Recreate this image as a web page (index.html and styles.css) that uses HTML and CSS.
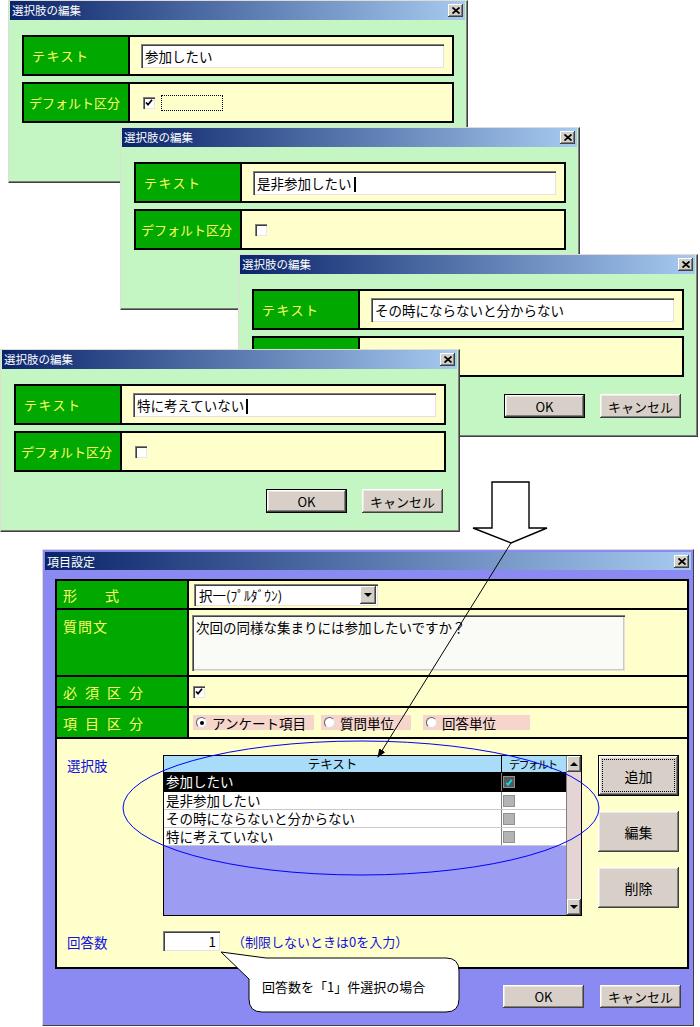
FILE: index.html
```html
<!DOCTYPE html>
<html lang="ja">
<head>
    <meta charset="UTF-8">
    <title>項目設定</title>
    <link rel="stylesheet" href="styles.css">
</head>
<body>

<!-- 選択肢の編集 ダイアログ (重なり順に) -->
<div class="dlg win1">
    <div class="titlebar">
        <span>選択肢の編集</span>
        <span class="close"><svg width="8" height="7" viewBox="0 0 8 7"><path d="M0.5 0.5L7.5 6.5M7.5 0.5L0.5 6.5" stroke="#000" stroke-width="1.8"/></svg></span>
    </div>
    <div class="dlg-body">
        <div class="row">
            <div class="label wide">テキスト</div>
            <div class="value"><div class="textbox">参加したい</div></div>
        </div>
        <div class="row">
            <div class="label">デフォルト区分</div>
            <div class="value">
                <span class="check"><svg width="12" height="12" viewBox="0 0 12 12"><path d="M3 5.5l2 2.2 4-5" stroke="#000" stroke-width="1.8" fill="none"/></svg></span>
                <span class="focus"></span>
            </div>
        </div>
        <div class="buttons">
            <button class="btn default">OK</button>
            <button class="btn">キャンセル</button>
        </div>
    </div>
</div>

<div class="dlg win2">
    <div class="titlebar">
        <span>選択肢の編集</span>
        <span class="close"><svg width="8" height="7" viewBox="0 0 8 7"><path d="M0.5 0.5L7.5 6.5M7.5 0.5L0.5 6.5" stroke="#000" stroke-width="1.8"/></svg></span>
    </div>
    <div class="dlg-body">
        <div class="row">
            <div class="label wide">テキスト</div>
            <div class="value"><div class="textbox">是非参加したい<span class="caret"></span></div></div>
        </div>
        <div class="row">
            <div class="label">デフォルト区分</div>
            <div class="value"><span class="check"></span></div>
        </div>
        <div class="buttons">
            <button class="btn default">OK</button>
            <button class="btn">キャンセル</button>
        </div>
    </div>
</div>

<div class="dlg win3">
    <div class="titlebar">
        <span>選択肢の編集</span>
        <span class="close"><svg width="8" height="7" viewBox="0 0 8 7"><path d="M0.5 0.5L7.5 6.5M7.5 0.5L0.5 6.5" stroke="#000" stroke-width="1.8"/></svg></span>
    </div>
    <div class="dlg-body">
        <div class="row">
            <div class="label wide">テキスト</div>
            <div class="value"><div class="textbox">その時にならないと分からない</div></div>
        </div>
        <div class="row">
            <div class="label">デフォルト区分</div>
            <div class="value"><span class="check"></span></div>
        </div>
        <div class="buttons">
            <button class="btn default">OK</button>
            <button class="btn">キャンセル</button>
        </div>
    </div>
</div>

<div class="dlg win4">
    <div class="titlebar">
        <span>選択肢の編集</span>
        <span class="close"><svg width="8" height="7" viewBox="0 0 8 7"><path d="M0.5 0.5L7.5 6.5M7.5 0.5L0.5 6.5" stroke="#000" stroke-width="1.8"/></svg></span>
    </div>
    <div class="dlg-body">
        <div class="row">
            <div class="label wide">テキスト</div>
            <div class="value"><div class="textbox">特に考えていない<span class="caret"></span></div></div>
        </div>
        <div class="row">
            <div class="label">デフォルト区分</div>
            <div class="value"><span class="check"></span></div>
        </div>
        <div class="buttons">
            <button class="btn default">OK</button>
            <button class="btn">キャンセル</button>
        </div>
    </div>
</div>

<!-- 項目設定 -->
<div class="main">
    <div class="titlebar main-title">
        <span>項目設定</span>
        <span class="close"><svg width="8" height="7" viewBox="0 0 8 7"><path d="M0.5 0.5L7.5 6.5M7.5 0.5L0.5 6.5" stroke="#000" stroke-width="1.8"/></svg></span>
    </div>

    <div class="frame">
        <div class="frow r1">
            <div class="flabel">形　　式</div>
            <div class="fvalue">
                <div class="select">
                    <span>択一(ﾌﾟﾙﾀﾞｳﾝ)</span>
                    <span class="drop"><span class="tri-down"></span></span>
                </div>
            </div>
        </div>
        <div class="frow r2">
            <div class="flabel top">質問文</div>
            <div class="fvalue top">
                <div class="textarea">次回の同様な集まりには参加したいですか？</div>
            </div>
        </div>
        <div class="frow r3">
            <div class="flabel spaced">必須区分</div>
            <div class="fvalue">
                <span class="check small"><svg width="12" height="12" viewBox="0 0 12 12"><path d="M3 5.5l2 2.2 4-5" stroke="#000" stroke-width="1.8" fill="none"/></svg></span>
            </div>
        </div>
        <div class="frow r4">
            <div class="flabel spaced">項目区分</div>
            <div class="fvalue">
                <span class="opt o1"><span class="radio on"></span>アンケート項目</span>
                <span class="opt o2"><span class="radio"></span>質問単位</span>
                <span class="opt o3"><span class="radio"></span>回答単位</span>
            </div>
        </div>

        <div class="choices">
            <div class="blue-label">選択肢</div>
            <div class="grid">
                <div class="grid-main">
                    <div class="ghead">
                        <div class="gcol-text">テキスト</div>
                        <div class="gcol-def">デフォルト</div>
                    </div>
                    <div class="grow sel">
                        <div class="gcol-text">参加したい</div>
                        <div class="gcol-def"><span class="gcheck on"><svg width="11" height="11" viewBox="0 0 11 11"><path d="M2.5 6l2 2 4-5.5" stroke="#00e0f0" stroke-width="2" fill="none"/></svg></span></div>
                    </div>
                    <div class="grow">
                        <div class="gcol-text">是非参加したい</div>
                        <div class="gcol-def"><span class="gcheck"></span></div>
                    </div>
                    <div class="grow">
                        <div class="gcol-text">その時にならないと分からない</div>
                        <div class="gcol-def"><span class="gcheck"></span></div>
                    </div>
                    <div class="grow">
                        <div class="gcol-text">特に考えていない</div>
                        <div class="gcol-def"><span class="gcheck"></span></div>
                    </div>
                </div>
                <div class="scrollbar">
                    <span class="sbtn"><span class="tri-up"></span></span>
                    <span class="track"></span>
                    <span class="sbtn"><span class="tri-down"></span></span>
                </div>
            </div>
            <div class="side-buttons">
                <button class="btn tall default"><span class="focus-in">追加</span></button>
                <button class="btn tall">編集</button>
                <button class="btn tall">削除</button>
            </div>
        </div>

        <div class="answers">
            <div class="blue-label">回答数</div>
            <div class="numbox">1</div>
            <div class="hint">（制限しないときは0を入力）</div>
        </div>
    </div>

    <div class="buttons main-buttons">
        <button class="btn">OK</button>
        <button class="btn">キャンセル</button>
    </div>
</div>

<!-- 注釈 -->
<svg class="overlay" width="700" height="1027" viewBox="0 0 700 1027">
    <defs>
        <marker id="ah" markerWidth="9" markerHeight="8" refX="8" refY="4" orient="auto" markerUnits="userSpaceOnUse">
            <path d="M0,0.5 L9,4 L0,7.5 z" fill="#000"/>
        </marker>
    </defs>
    <polygon points="492,482 529,482 529,528 547,528 511,543 473,528 492,528" fill="#fff" stroke="#000" stroke-width="1.4"/>
    <line x1="511" y1="543" x2="378" y2="757" stroke="#000" stroke-width="1" marker-end="url(#ah)"/>
    <ellipse cx="361" cy="808" rx="238" ry="67" fill="none" stroke="#0000ff" stroke-width="1"/>
    <path d="M266,958 L446,958 Q459,958 459,971 L459,999 Q459,1012 446,1012 L262,1012 Q249,1012 249,999 L249,979 L221,952 Z" fill="#fff" stroke="#000" stroke-width="1"/>
</svg>
<div class="callout-text">回答数を「1」件選択の場合</div>

</body>
</html>
```

FILE: styles.css
```css
* {
    box-sizing: border-box;
    margin: 0;
    padding: 0;
}

body {
    position: relative;
    width: 700px;
    height: 1027px;
    overflow: hidden;
    background-color: #fff;
    font-family: "Noto Sans CJK JP", "Liberation Sans", sans-serif;
    font-size: 13px;
    color: #000;
}

/* ウィンドウ共通 */
.titlebar {
    height: 19px;
    display: flex;
    align-items: center;
    justify-content: space-between;
    padding: 0 2px;
    background: linear-gradient(to right, #0a246a, #a6caf0);
    color: #fff;
    font-size: 11.5px;
    line-height: 19px;
}

.close {
    width: 15px;
    height: 13px;
    display: flex;
    align-items: center;
    justify-content: center;
    background-color: #d4d0c8;
    box-shadow: inset -1px -1px #404040, inset 1px 1px #fff, inset -2px -2px #808080;
}

.btn {
    width: 81px;
    height: 24px;
    font-family: inherit;
    font-size: 13px;
    color: #000;
    background-color: #d8d0c8;
    border: none;
    box-shadow: inset -1px -1px #404040, inset 1px 1px #fff, inset -2px -2px #808080, inset 2px 2px #ece8e0;
}

.btn.default {
    border: 1px solid #000;
}

.buttons {
    display: flex;
    justify-content: flex-end;
    gap: 15px;
    margin-top: 17px;
    padding-right: 3px;
}

.check {
    width: 12px;
    height: 12px;
    display: inline-flex;
    background-color: #fff;
    box-shadow: inset 1px 1px #808080, inset 2px 2px #404040, inset -1px -1px #e8e8e8;
    margin-left: 2px;
}

.caret {
    display: inline-block;
    width: 2px;
    height: 15px;
    background-color: #000;
    margin-left: 2px;
    vertical-align: -3px;
}

/* 選択肢の編集 */
.dlg {
    position: absolute;
    width: 460px;
    height: 183px;
    padding: 0 2px 2px 1px;
    background-color: #c4f6c4;
    border: 1px solid;
    border-color: #e0dcd4 #404040 #404040 #e0dcd4;
    box-shadow: inset -1px -1px #808080;
}

.win1 { left: 8px; top: 0; }
.win2 { left: 120px; top: 127px; }
.win3 { left: 238px; top: 254px; }
.win4 { left: 0; top: 349px; }

.dlg-body {
    padding: 15px 11px 0 12px;
}

.row {
    display: flex;
    height: 41px;
    border: 2px solid #000;
}

.row + .row {
    margin-top: 6px;
}

.label {
    width: 106px;
    display: flex;
    align-items: center;
    padding-left: 5px;
    background-color: #00a800;
    color: #ffff66;
    border-right: 2px solid #000;
    font-size: 13px;
}

.label.wide {
    padding-left: 8px;
    letter-spacing: 1.5px;
}

.value {
    flex: 1;
    display: flex;
    align-items: center;
    padding-left: 11px;
    background-color: #ffffcc;
}

.textbox {
    width: 303px;
    height: 24px;
    padding-left: 4px;
    background-color: #fff;
    box-shadow: inset 1px 1px #808080, inset 2px 2px #404040, inset -1px -1px #e8e0e0;
    font-size: 13.5px;
    line-height: 24px;
    white-space: nowrap;
}

.focus {
    width: 62px;
    height: 16px;
    margin-left: 6px;
    border: 1px dotted #000;
}

/* 項目設定 */
.main {
    position: absolute;
    left: 42px;
    top: 549px;
    width: 652px;
    height: 477px;
    padding: 2px;
    background-color: #8a8af2;
    border: 1px solid;
    border-color: #e0dcd4 #404040 #404040 #e0dcd4;
}

.main-title {
    height: 18px;
    font-size: 12px;
}

.frame {
    width: 634px;
    height: 390px;
    margin: 9px 0 0 10px;
    background-color: #ffffcc;
    border: 2px solid #000;
}

.frow {
    display: flex;
    border-bottom: 2px solid #000;
}

.r1 { height: 29px; }
.r2 { height: 67px; }
.r3 { height: 31px; }
.r4 { height: 31px; }

.flabel {
    width: 132px;
    display: flex;
    align-items: center;
    padding-left: 6px;
    background-color: #00a800;
    color: #ffff66;
    border-right: 2px solid #000;
    font-size: 14px;
}

.flabel.top {
    align-items: flex-start;
    padding-top: 6px;
    letter-spacing: 1px;
}

.flabel.spaced {
    letter-spacing: 8px;
}

.fvalue {
    flex: 1;
    display: flex;
    align-items: center;
    padding-left: 4px;
}

.fvalue.top {
    align-items: flex-start;
    padding-top: 5px;
    padding-left: 3px;
}

.select {
    width: 184px;
    height: 22px;
    margin-left: 1px;
    display: flex;
    align-items: center;
    padding: 2px 2px 2px 5px;
    background-color: #fff;
    box-shadow: inset 1px 1px #808080, inset 2px 2px #404040, inset -1px -1px #e8e0e0;
    font-size: 13.5px;
}

.drop {
    width: 16px;
    height: 18px;
    margin-left: auto;
    display: flex;
    align-items: center;
    justify-content: center;
    background-color: #d4d0c8;
    box-shadow: inset -1px -1px #404040, inset 1px 1px #fff, inset -2px -2px #808080;
}

.tri-down {
    width: 0;
    height: 0;
    border-left: 4px solid transparent;
    border-right: 4px solid transparent;
    border-top: 4px solid #000;
}

.tri-up {
    width: 0;
    height: 0;
    border-left: 4px solid transparent;
    border-right: 4px solid transparent;
    border-bottom: 4px solid #000;
}

.textarea {
    width: 433px;
    height: 56px;
    padding: 3px 4px;
    background-color: #fafaf6;
    box-shadow: inset 1px 1px #808080, inset 2px 2px #404040, inset -1px -1px #e8e0e0, inset -2px -2px #c8c8c8;
    font-size: 13.5px;
    line-height: 18px;
}

.check.small {
    width: 12px;
    height: 12px;
    margin-left: 0;
}

.opt {
    display: inline-flex;
    align-items: center;
    gap: 5px;
    height: 15px;
    padding-left: 3px;
    background-color: #f6d6cc;
    font-size: 13.5px;
}

.o1 { width: 121px; margin-right: 7px; }
.o2 { width: 90px; margin-right: 12px; }
.o3 { width: 107px; }

.radio {
    width: 11px;
    height: 11px;
    display: inline-flex;
    align-items: center;
    justify-content: center;
    border-radius: 50%;
    background-color: #fff;
    border: 1px solid;
    border-color: #606060 #e0e0e0 #e0e0e0 #606060;
}

.radio.on::after {
    content: "";
    width: 4px;
    height: 4px;
    border-radius: 50%;
    background-color: #000;
}

.choices {
    display: flex;
    padding: 16px 0 0 10px;
}

.blue-label {
    width: 96px;
    padding-top: 2px;
    color: #1010e0;
    font-size: 13.5px;
    line-height: 16px;
}

.grid {
    width: 419px;
    height: 161px;
    display: flex;
    border: 1px solid #000;
}

.grid-main {
    flex: 1;
    display: flex;
    flex-direction: column;
    background-color: #9c9cf2;
}

.ghead {
    display: flex;
    height: 17px;
    background-color: #a8dcf8;
    border-bottom: 1px solid #000;
    line-height: 16px;
}

.ghead .gcol-text {
    text-align: center;
    font-size: 12.5px;
    padding-left: 0;
}

.ghead .gcol-def {
    font-size: 11px;
    letter-spacing: -1.5px;
    padding-left: 7px;
    white-space: nowrap;
    overflow: hidden;
    border-left-color: #000;
}

.gcol-text {
    width: 337px;
    padding-left: 2px;
    white-space: nowrap;
}

.gcol-def {
    flex: 1;
    display: flex;
    align-items: center;
    border-left: 1px solid #808080;
}

.grow {
    display: flex;
    height: 18px;
    background-color: #fff;
    border-bottom: 1px solid #c8c8c8;
    font-size: 13.5px;
    line-height: 17px;
}

.grow.sel {
    height: 19px;
    background-color: #000;
    color: #fff;
    border-bottom-color: #000;
}

.gcheck {
    width: 12px;
    height: 12px;
    margin-left: 1px;
    display: inline-flex;
    align-items: center;
    justify-content: center;
    background-color: #b4b4b4;
    border: 1px solid #909090;
}

.gcheck.on {
    background-color: #585858;
    border-color: #909090;
}

.scrollbar {
    width: 15px;
    display: flex;
    flex-direction: column;
    background-color: #e4d4d4;
    border-left: 1px solid #808080;
}

.sbtn {
    height: 16px;
    display: flex;
    align-items: center;
    justify-content: center;
    background-color: #d4d0c8;
    box-shadow: inset -1px -1px #404040, inset 1px 1px #fff, inset -2px -2px #808080;
}

.track {
    flex: 1;
}

.side-buttons {
    display: flex;
    flex-direction: column;
    gap: 15px;
    margin-left: 16px;
}

.btn.tall {
    height: 41px;
    font-size: 14px;
}

.focus-in {
    display: flex;
    align-items: center;
    justify-content: center;
    margin: 3px;
    height: 33px;
    border: 1px dotted #000;
}

.answers {
    display: flex;
    align-items: center;
    padding: 15px 0 0 10px;
}

.numbox {
    width: 57px;
    height: 20px;
    padding-right: 4px;
    text-align: right;
    background-color: #fff;
    box-shadow: inset 1px 1px #808080, inset 2px 2px #404040, inset -1px -1px #e8e0e0;
    font-size: 13.5px;
    line-height: 20px;
}

.hint {
    margin-left: 12px;
    color: #1010e0;
    font-size: 13px;
}

.main-buttons {
    margin-top: 16px;
    padding-right: 10px;
    gap: 16px;
}

.main-buttons .btn {
    height: 23px;
}

/* 注釈 */
.overlay {
    position: absolute;
    left: 0;
    top: 0;
    pointer-events: none;
}

.callout-text {
    position: absolute;
    left: 262px;
    top: 979px;
    font-size: 13px;
    line-height: 16px;
}
```
